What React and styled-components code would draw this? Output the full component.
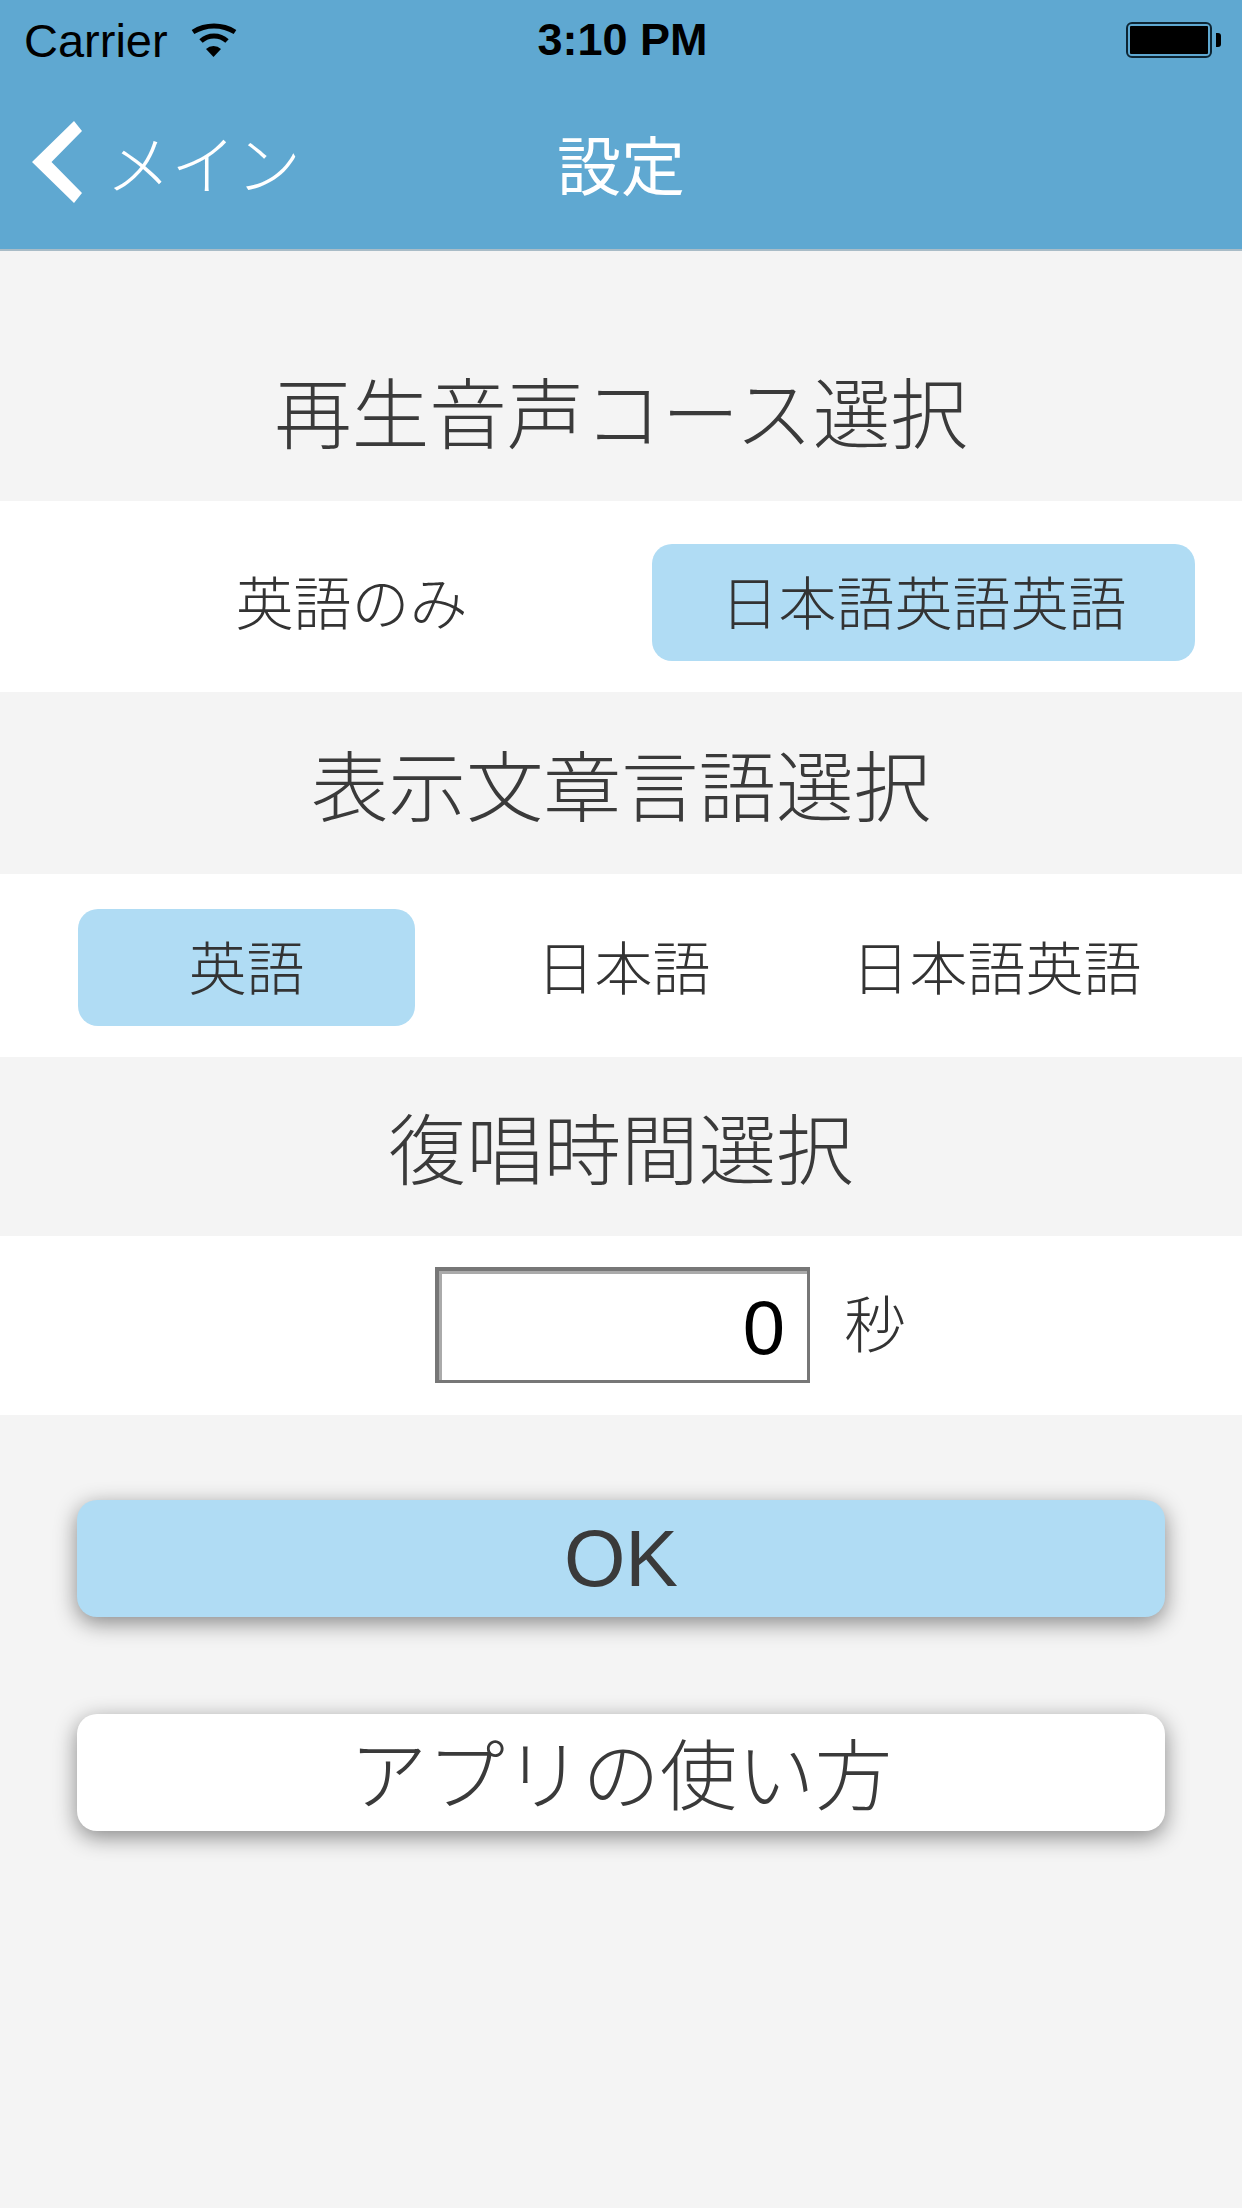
import React from "react";
import styled, { createGlobalStyle } from "styled-components";

const GlobalStyle = createGlobalStyle`
html, body {
  margin: 0;
  padding: 0;
  background: #f4f4f4;
}
* {
  box-sizing: border-box;
}
`

const CJK = `"Noto Sans CJK JP", "Liberation Sans", sans-serif`

const Page = styled.div`
width: 1242px;
min-height: 2208px;
background: #f4f4f4;
display: flex;
flex-direction: column;
font-family: ${CJK};
font-weight: 300;
color: #3a3a3a;
`
const Header = styled.header`
height: 251px;
background: #5fa8d1;
border-bottom: 2px solid #a9bcc7;
display: flex;
flex-direction: column;
`
const StatusBar = styled.div`
height: 80px;
padding: 0 21px 0 24px;
display: grid;
grid-template-columns: 1fr auto 1fr;
align-items: center;
color: #000;
font-family: "Liberation Sans", sans-serif;
font-size: 47px;
`
const Carrier = styled.div`
display: flex;
align-items: center;
gap: 22px;
`
const Clock = styled.div`
font-weight: 700;
font-size: 45px;
`
const Battery = styled.svg`
justify-self: end;
width: 95px;
height: 36px;
`
const NavBar = styled.nav`
height: 169px;
padding: 0 32px 6px;
display: grid;
grid-template-columns: 1fr auto 1fr;
align-items: center;
color: #fff;
`
const BackLink = styled.a`
display: flex;
align-items: center;
gap: 24px;
font-size: 65px;
line-height: 1;
`
const NavTitle = styled.h1`
margin: 0;
font-size: 64px;
font-weight: 400;
`
const Heading = styled.h2`
margin: 0;
height: ${(p) => p.$height}px;
padding: ${(p) => p.$top}px 0 ${(p) => p.$bottom}px;
display: flex;
align-items: center;
justify-content: center;
font-size: 77.5px;
font-weight: 300;
`
const OptionRow = styled.div`
display: grid;
grid-template-columns: ${(p) => p.$columns};
gap: ${(p) => p.$gap}px;
background: #fff;
height: ${(p) => p.$height}px;
padding: ${(p) => p.$padding};
`
const Option = styled.div`
display: flex;
align-items: center;
justify-content: center;
height: 117px;
padding-bottom: 5px;
border-radius: 20px;
font-size: 58px;
color: #333;
background: ${(p) => (p.$selected ? "#b0dcf4" : "transparent")};
`
const SecondsRow = styled.div`
height: 179px;
background: #fff;
padding: 31px 0 0 435px;
display: flex;
align-items: flex-start;
gap: 34px;
`
const SecondsInput = styled.input`
width: 375px;
height: 116px;
border-style: solid;
border-color: #777;
border-width: 4px 3px 3px 4px;
border-radius: 0;
box-shadow: inset 3px 3px 0 #aaa;
padding: 3px 22px 0 0;
background: #fff;
outline: none;
text-align: right;
font-family: "Liberation Sans", sans-serif;
font-size: 76px;
color: #000;
`
const SecondsLabel = styled.span`
font-size: 62px;
line-height: 108px;
color: #333;
`
const Actions = styled.div`
padding: 85px 77px 0;
display: flex;
flex-direction: column;
gap: 97px;
`
const ActionButton = styled.button`
height: 117px;
border: none;
border-radius: 20px;
padding: 0 0 ${(p) => (p.$primary ? 0 : 5)}px;
background: ${(p) => (p.$primary ? "#b0dcf4" : "#fff")};
box-shadow: 0 6px 22px rgba(0, 0, 0, 0.45);
color: #3a3a3a;
font-family: ${(p) => (p.$primary ? `"Liberation Sans", sans-serif` : CJK)};
font-size: ${(p) => (p.$primary ? 79 : 77.5)}px;
font-weight: 300;
`

function WifiIcon() {
    return (
        <svg width="48" height="36" viewBox="0 0 48 36">
            <path d="M3 10 A39.75 39.75 0 0 1 45 10" fill="none" stroke="#000" strokeWidth="5" />
            <path d="M11 19 A19.4 19.4 0 0 1 37 19" fill="none" stroke="#000" strokeWidth="5" />
            <path d="M16 27 A10.9 10.9 0 0 1 31 27 L23.5 35 Z" fill="#000" />
        </svg>
    )
}

function BatteryIcon() {
    return (
        <Battery viewBox="0 0 95 36">
            <rect x="1" y="1" width="84" height="34" rx="5" fill="none" stroke="#0d2533" strokeWidth="2" />
            <rect x="4" y="4" width="78" height="28" rx="1" fill="#000" />
            <path d="M90 11 h2 a3 3 0 0 1 3 3 v8 a3 3 0 0 1 -3 3 h-2 Z" fill="#000" />
        </Battery>
    )
}

function Chevron() {
    return (
        <svg width="50" height="82" viewBox="0 0 50 82">
            <polygon points="42,0 50,10 19.5,41 50,72 42,82 0,41" fill="#fff" />
        </svg>
    )
}

function App() {
    return (
        <Page>
            <GlobalStyle />
            <Header>
                <StatusBar>
                    <Carrier>
                        Carrier
                        <WifiIcon />
                    </Carrier>
                    <Clock>3:10 PM</Clock>
                    <BatteryIcon />
                </StatusBar>
                <NavBar>
                    <BackLink>
                        <Chevron />
                        メイン
                    </BackLink>
                    <NavTitle>設定</NavTitle>
                </NavBar>
            </Header>

            <Heading $height={250} $top={66} $bottom={0}>再生音声コース選択</Heading>
            <OptionRow $columns="543px 543px" $gap={29} $height={191} $padding="43px 0 0 80px">
                <Option>英語のみ</Option>
                <Option $selected>日本語英語英語</Option>
            </OptionRow>

            <Heading $height={182} $top={0} $bottom={3}>表示文章言語選択</Heading>
            <OptionRow $columns="337px 337px 329px" $gap={40} $height={183} $padding="35px 0 0 78px">
                <Option $selected>英語</Option>
                <Option>日本語</Option>
                <Option>日本語英語</Option>
            </OptionRow>

            <Heading $height={179} $top={0} $bottom={3}>復唱時間選択</Heading>
            <SecondsRow>
                <SecondsInput defaultValue="0" />
                <SecondsLabel>秒</SecondsLabel>
            </SecondsRow>

            <Actions>
                <ActionButton $primary>OK</ActionButton>
                <ActionButton>アプリの使い方</ActionButton>
            </Actions>
        </Page>
    )
}

export default App
